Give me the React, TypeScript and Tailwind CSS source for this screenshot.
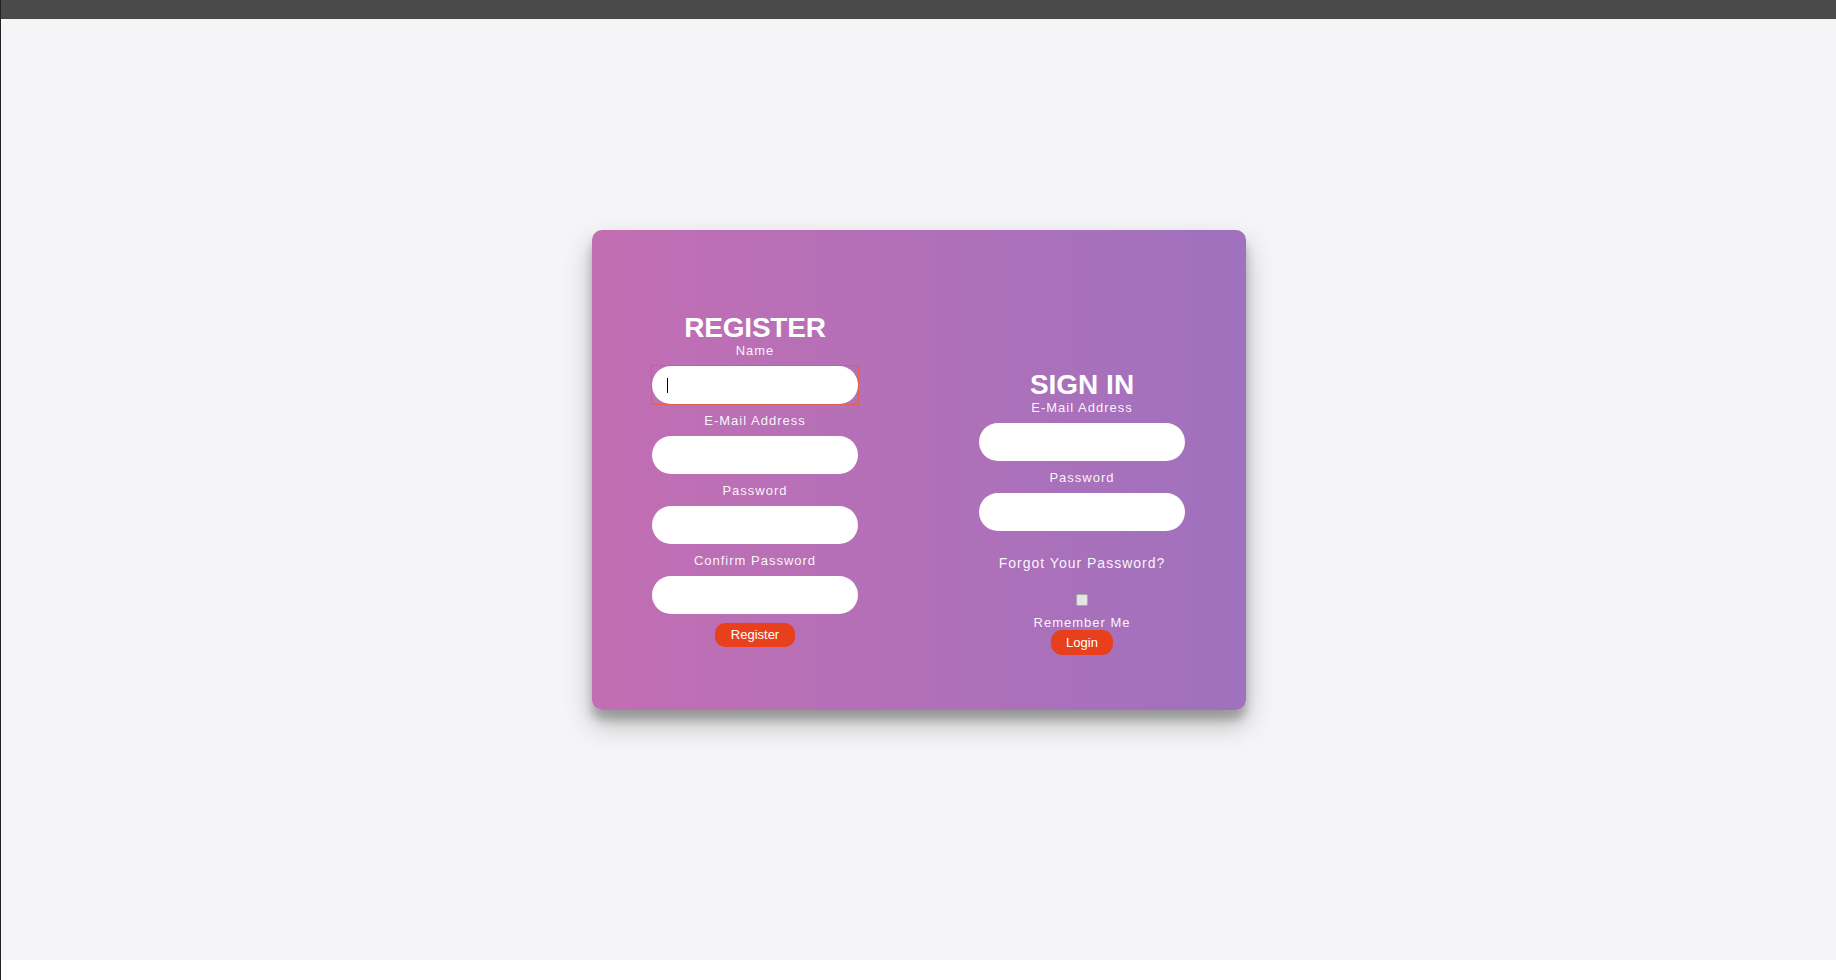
const Field = ({ label, focused }: { label: string; focused?: boolean }) => (
  <div className="flex flex-col items-center">
    <label className="text-[13px] leading-[15px] tracking-[1px] text-white/95">
      {label}
    </label>
    <div
      className={`relative mt-2 mb-[9px] ${
        focused ? "outline outline-1 outline-offset-0 outline-[#e0604f]" : ""
      }`}
    >
      <input
        type="text"
        className="block w-[206px] h-[38px] rounded-full bg-white px-4 text-sm text-black border-0 outline-none"
      />
      {focused && (
        <span className="absolute left-[15px] top-[12px] h-[15px] w-px bg-black" />
      )}
    </div>
  </div>
);

const App = () => {
  return (
    <div className="min-h-screen flex flex-col border-l border-[#222] bg-white font-['Liberation_Sans',Arial,sans-serif]">
      {/* top bar */}
      <div className="h-[19px] bg-[#4a4a4a]" />

      <main className="h-[941px] bg-[#f5f5f7] flex justify-center pt-[211px]">
        <div className="w-[654px] h-[480px] rounded-[10px] bg-gradient-to-r from-[#c36eb3] to-[#9f71be] shadow-[0_14px_28px_rgba(0,0,0,0.25),0_10px_10px_rgba(0,0,0,0.22)] grid grid-cols-2 text-white">
          {/* Register */}
          <form className="flex flex-col items-center pt-[82px]">
            <h1 className="text-[28px] leading-[31px] font-bold tracking-[-0.2px]">REGISTER</h1>
            <Field label="Name" focused />
            <Field label="E-Mail Address" />
            <Field label="Password" />
            <Field label="Confirm Password" />
            <button
              type="button"
              className="h-[24px] px-4 rounded-[10px] bg-[#e8401c] text-[13px] leading-[24px] text-white"
            >
              Register
            </button>
          </form>

          {/* Sign in */}
          <form className="flex flex-col items-center pt-[139px]">
            <h1 className="text-[28px] leading-[31px] font-bold">SIGN IN</h1>
            <Field label="E-Mail Address" />
            <Field label="Password" />
            <a className="mt-[15px] text-[14px] leading-[16px] tracking-[1px] text-white/95">
              Forgot Your Password?
            </a>
            <span className="mt-[23px] block w-[12px] h-[12px] rounded-[2px] border border-[#a9a9a9] bg-[#e4e4e4]" />
            <label className="mt-[9px] text-[13px] leading-[15px] tracking-[1px] text-white/95">
              Remember Me
            </label>
            <button
              type="button"
              className="h-[25px] px-[15px] rounded-[11px] bg-[#e8401c] text-[13px] leading-[25px] text-white"
            >
              Login
            </button>
          </form>
        </div>
      </main>
    </div>
  );
};

export default App;
